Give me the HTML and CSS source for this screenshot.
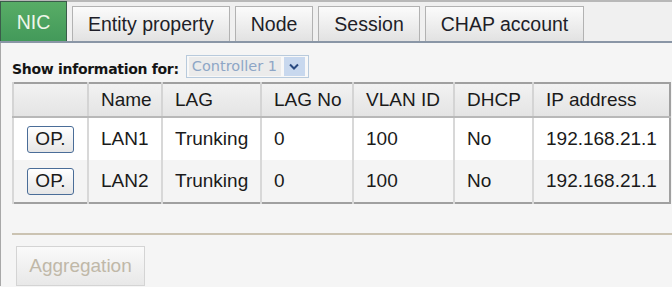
FILE: index.html
```html
<!DOCTYPE html>
<html>
<head>
<title>NIC</title>
    <link rel="stylesheet" href="styles.css">
</head>
<body>
<div class="tabs">
  <div class="tab active">NIC</div>
  <div class="tab">Entity property</div>
  <div class="tab">Node</div>
  <div class="tab">Session</div>
  <div class="tab">CHAP account</div>
</div>

<div class="panel">
  <div class="showfor">
    <span class="label">Show information for:</span>
    <div class="select">
      <span class="value">Controller 1</span>
      <span class="arrow">
        <svg width="10" height="7" viewBox="0 0 10 7"><path d="M1 1.5 L5 5.5 L9 1.5" fill="none" stroke="#2a4a80" stroke-width="2"/></svg>
      </span>
    </div>
  </div>

  <table class="grid">
    <colgroup>
      <col class="w0"><col class="w1"><col class="w2"><col class="w3"><col class="w4"><col class="w5"><col>
    </colgroup>
    <tr>
      <th></th>
      <th>Name</th>
      <th>LAG</th>
      <th>LAG No</th>
      <th>VLAN ID</th>
      <th>DHCP</th>
      <th>IP address</th>
    </tr>
    <tr>
      <td class="op"><button class="opbtn">OP.</button></td>
      <td>LAN1</td>
      <td>Trunking</td>
      <td>0</td>
      <td>100</td>
      <td>No</td>
      <td>192.168.21.1</td>
    </tr>
    <tr class="alt">
      <td class="op"><button class="opbtn">OP.</button></td>
      <td>LAN2</td>
      <td>Trunking</td>
      <td>0</td>
      <td>100</td>
      <td>No</td>
      <td>192.168.21.1</td>
    </tr>
  </table>

  <div class="sep"></div>
  <button class="aggr" disabled>Aggregation</button>
</div>
</body>
</html>
```

FILE: styles.css
```css
body {
  margin: 0;
  width: 672px;
  height: 287px;
  overflow: hidden;
  background-color: #f5f5f5;
  font-family: "Liberation Sans", Arial, sans-serif;
  color: #1a1a1a;
}

.tabs {
  display: flex;
  align-items: flex-end;
  gap: 5px;
  background-color: #f0f0f0;
  border-top: 2px solid #b8b8b8;
  border-bottom: 2px solid #8a96a6;
  box-sizing: border-box;
  height: 43px;
}

.tab {
  height: 35px;
  line-height: 34px;
  padding: 0 15px;
  font-size: 19.5px;
  color: #1e1e28;
  background: linear-gradient(180deg, #fbfbfb, #e2e2e2);
  border: 1px solid #b2b2b2;
  border-bottom: none;
  box-sizing: border-box;
}

.tab.active {
  height: 40px;
  line-height: 40px;
  width: 67px;
  text-align: center;
  padding: 0;
  color: #eef6ea;
  background: linear-gradient(180deg, #58ad66, #43995a);
  border: 1px solid #3a5c4a;
  border-bottom: none;
}

.panel {
  border-left: 1px solid #a8a8a8;
  padding: 12px 0 0 11px;
}

.showfor {
  display: flex;
  align-items: center;
  height: 23px;
}

.label {
  font-family: "DejaVu Sans", Verdana, sans-serif;
  font-weight: bold;
  font-size: 14px;
  color: #141414;
  letter-spacing: -0.3px;
  margin-top: 4px;
}

.select {
  display: flex;
  align-items: center;
  margin-left: 7px;
  width: 123px;
  height: 23px;
  border: 1px solid #b8cadc;
  box-sizing: border-box;
  background-color: #f8f8f8;
}

.select .value {
  margin-left: 2px;
  width: 92px;
  height: 19px;
  line-height: 19px;
  padding-left: 3px;
  background-color: #ebebeb;
  font-family: "DejaVu Sans", Verdana, sans-serif;
  font-size: 14.5px;
  color: #8ea6c6;
  box-sizing: border-box;
  white-space: nowrap;
}

.select .arrow {
  display: flex;
  align-items: center;
  justify-content: center;
  margin-left: 3px;
  width: 21px;
  height: 19px;
  background-color: #c8d8ee;
}

.grid {
  margin-top: 4px;
  width: 659px;
  table-layout: fixed;
  border-collapse: collapse;
  border: 2px solid #a0a0a0;
  font-size: 19px;
}

.w0 { width: 75px; }
.w1 { width: 74px; }
.w2 { width: 99px; }
.w3 { width: 92px; }
.w4 { width: 101px; }
.w5 { width: 79px; }

.grid th {
  height: 32px;
  font-weight: normal;
  text-align: left;
  padding: 0 0 0 12px;
  background: linear-gradient(180deg, #f2f2f2, #e4e4e4);
  border-left: 2px solid #d4d4d4;
  border-bottom: 2px solid #b8b8b8;
  white-space: nowrap;
}

.grid td {
  height: 42px;
  padding: 0 0 0 12px;
  background-color: #ffffff;
  border-left: 2px solid #d8d8d8;
  white-space: nowrap;
}

.grid tr.alt td {
  background-color: #f4f4f4;
}

.grid td.op {
  padding-left: 13px;
}

.opbtn {
  width: 47px;
  height: 27px;
  padding: 0;
  font-family: "Liberation Sans", Arial, sans-serif;
  font-size: 19px;
  color: #1a1a1a;
  background: linear-gradient(180deg, #ffffff, #e6e6e6);
  border: 1px solid #4a6d98;
  border-radius: 3px;
}

.sep {
  margin-top: 29px;
  height: 2px;
  background-color: #cbc3b2;
}

.aggr {
  margin: 11px 0 0 4px;
  width: 129px;
  height: 40px;
  padding: 0;
  font-family: "Liberation Sans", Arial, sans-serif;
  font-size: 19px;
  color: #c0b8a8;
  background: linear-gradient(180deg, #fafafa, #e8e8e8);
  border: 1px solid #d4d4d4;
}
```
